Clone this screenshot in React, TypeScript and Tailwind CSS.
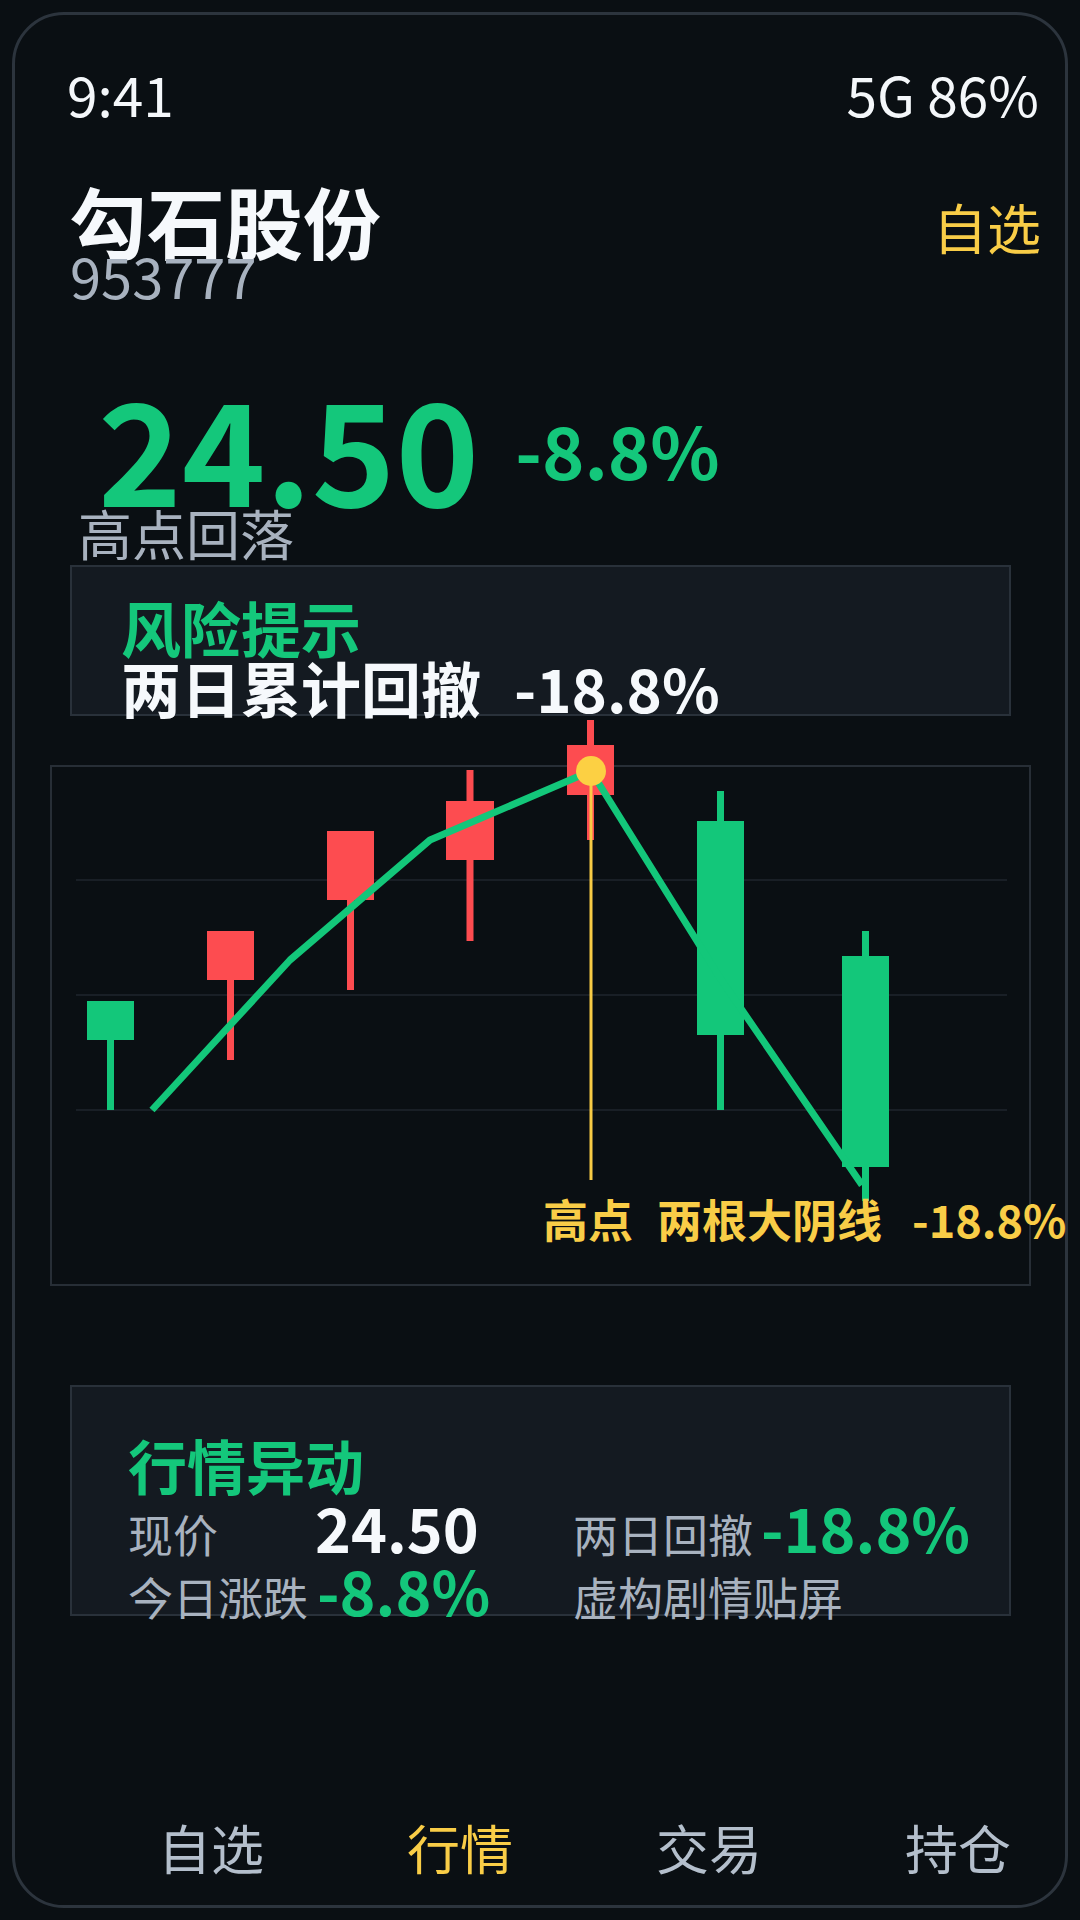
import React from "react";

const FONT = { fontFamily: '"Noto Sans CJK SC", "Noto Sans", sans-serif' };

function Chart() {
  const candles = [
    { x: 87, w: 47, by: 1001, bh: 39, wt: 1040, wb: 1110, c: "#13c77a" },
    { x: 207, w: 47, by: 931, bh: 49, wt: 931, wb: 1060, c: "#fd4c50" },
    { x: 327, w: 47, by: 831, bh: 69, wt: 831, wb: 990, c: "#fd4c50" },
    { x: 446, w: 48, by: 801, bh: 59, wt: 770, wb: 941, c: "#fd4c50" },
    { x: 567, w: 47, by: 745, bh: 50, wt: 720, wb: 840, c: "#fd4c50" },
    { x: 697, w: 47, by: 821, bh: 214, wt: 791, wb: 1110, c: "#13c77a" },
    { x: 842, w: 47, by: 956, bh: 211, wt: 931, wb: 1201, c: "#13c77a" },
  ];
  return (
    <svg
      className="absolute left-0 top-0 overflow-visible"
      width={977}
      height={517}
      viewBox="52 767 977 517"
    >
      {[880, 995, 1110].map((y) => (
        <line key={y} x1={76} x2={1007} y1={y} y2={y} stroke="#1f262e" strokeWidth={1.5} />
      ))}
      {candles.map((k, i) => (
        <g key={i}>
          <rect x={k.x + k.w / 2 - 3.5} y={k.wt} width={7} height={k.wb - k.wt} fill={k.c} />
          <rect x={k.x} y={k.by} width={k.w} height={k.bh} fill={k.c} />
        </g>
      ))}
      <polyline
        points="152,1110 290,960 430,840 591,771 720,978 862,1185"
        fill="none"
        stroke="#13c77a"
        strokeWidth={7}
        strokeLinejoin="round"
      />
      <line x1={591} x2={591} y1={771} y2={1180} stroke="#f8cb45" strokeWidth={3} />
      <circle cx={591} cy={771} r={15} fill="#fcd043" />
    </svg>
  );
}

export default function App() {
  return (
    <div className="w-[1080px] h-[1920px] bg-[#0a0f13] overflow-hidden" style={FONT}>
      <div className="m-[12px] w-[1056px] h-[1896px] border-[3px] border-[#2c343d] rounded-[52px] flex flex-col">
        {/* status bar */}
        <div className="pt-[51px] pl-[52px] pr-[26px] flex justify-between text-[55px] leading-[55px] text-[#f4f7fa]">
          <span>9:41</span>
          <span>5G 86%</span>
        </div>

        {/* title */}
        <div className="mt-[64px] pl-[54px] pr-[24px] flex justify-between items-start">
          <span className="text-[78px] leading-[70px] font-bold text-[#f6f9fc]">勾石股份</span>
          <span className="mt-[15px] text-[54px] leading-[54px] text-[#f9cd47]">自选</span>
        </div>
        <div className="pl-[55px] text-[56px] leading-[39px] text-[#a8b2bf]">953777</div>

        {/* price */}
        <div className="mt-[95px] pl-[83px] flex items-start gap-[36px]">
          <span className="text-[142px] leading-[112px] font-bold text-[#14c77b]">24.50</span>
          <span className="mt-[24px] text-[72px] leading-[72px] font-bold text-[#14c77b]">-8.8%</span>
        </div>
        <div className="pl-[63px] text-[54px] leading-[64px] text-[#a8b2bf]">高点回落</div>

        {/* risk box */}
        <div className="ml-[55px] w-[941px] h-[151px] border-2 border-[#29313a] bg-[#141a21] pl-[49px] pt-[30px]">
          <div className="text-[60px] leading-[60px] font-bold text-[#14c77b]">风险提示</div>
          <div className="flex gap-[33px] text-[60px] leading-[60px] font-bold text-[#f6f9fc] whitespace-nowrap">
            <span>两日累计回撤</span>
            <span>-18.8%</span>
          </div>
        </div>

        {/* chart */}
        <div className="mt-[49px] ml-[35px] w-[981px] h-[521px] border-2 border-[#272e36] relative">
          <Chart />
          <div className="absolute left-[491px] top-[429px] flex whitespace-nowrap text-[45px] leading-[45px] font-bold text-[#f9cd47]">
            <span>高点</span>
            <span className="ml-[24px]">两根大阴线</span>
            <span className="ml-[30px]">-18.8%</span>
          </div>
        </div>

        {/* market card */}
        <div className="mt-[99px] ml-[55px] w-[941px] h-[231px] border-2 border-[#29313a] bg-[#141a21] pl-[56px] pt-[48px]">
          <div className="text-[59px] leading-[60px] font-bold text-[#14c77b]">行情异动</div>
          <div className="mt-[4px] flex items-baseline leading-[56px] whitespace-nowrap">
            <div className="w-[445px] flex items-baseline">
              <span className="w-[180px] text-[45px] text-[#a8b2bf]">现价</span>
              <span className="ml-[7px] text-[61px] font-bold text-[#f6f9fc]">24.50</span>
            </div>
            <div className="flex items-baseline">
              <span className="w-[180px] text-[45px] text-[#a8b2bf]">两日回撤</span>
              <span className="ml-[8px] text-[61px] font-bold text-[#14c77b]">-18.8%</span>
            </div>
          </div>
          <div className="flex items-baseline leading-[56px] whitespace-nowrap">
            <div className="w-[445px] flex items-baseline">
              <span className="w-[180px] text-[45px] text-[#a8b2bf]">今日涨跌</span>
              <span className="ml-[9px] text-[61px] font-bold text-[#14c77b]">-8.8%</span>
            </div>
            <div className="flex items-baseline">
              <span className="text-[45px] text-[#a8b2bf]">虚构剧情贴屏</span>
            </div>
          </div>
        </div>

        {/* tab bar */}
        <div className="mt-[205px] pl-[143px] pr-[54px] flex justify-between text-[53px] leading-[53px]">
          <span className="text-[#b4bfcc]">自选</span>
          <span className="text-[#f9cd47]">行情</span>
          <span className="text-[#b4bfcc]">交易</span>
          <span className="text-[#b4bfcc]">持仓</span>
        </div>
      </div>
    </div>
  );
}
